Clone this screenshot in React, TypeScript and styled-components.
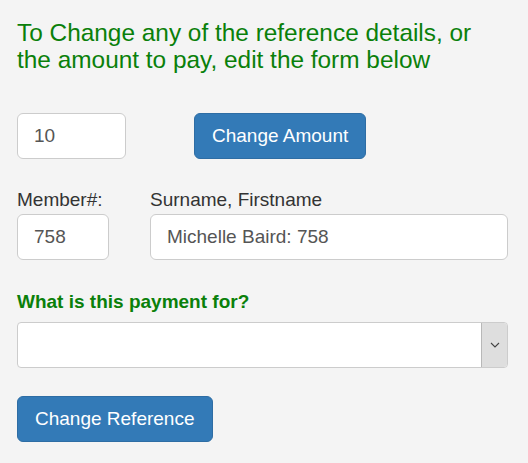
import React from 'react';
import styled, { createGlobalStyle } from 'styled-components';

const GlobalStyle = createGlobalStyle`
  body {
    margin: 0;
    background: #f4f4f4;
    font-family: 'Liberation Sans', Arial, sans-serif;
  }
`;

const Page = styled.div`
  padding: 19px 20px 20px 17px;
  display: flex;
  flex-direction: column;
`;

const Heading = styled.h2`
  margin: 0 0 40px;
  font-size: 24.4px;
  line-height: 27px;
  font-weight: normal;
  color: #0a800a;
`;

const Row = styled.div<{ $gap: number }>`
  display: flex;
  align-items: flex-end;
  gap: ${(p) => p.$gap}px;
`;

const Field = styled.div<{ $grow?: boolean }>`
  display: flex;
  flex-direction: column;
  flex: ${(p) => (p.$grow ? 1 : '0 0 auto')};
`;

const Label = styled.label`
  font-size: 19px;
  line-height: 20px;
  color: #333;
  margin-bottom: 4px;
`;

const Input = styled.input<{ $width?: number }>`
  box-sizing: border-box;
  width: ${(p) => (p.$width ? `${p.$width}px` : '100%')};
  height: 46px;
  padding: 0 16px;
  font-family: inherit;
  font-size: 19px;
  color: #555;
  background: #fff;
  border: 1px solid #ccc;
  border-radius: 6px;
  outline: none;
`;

const Button = styled.button`
  box-sizing: border-box;
  height: 46px;
  padding: 0 17px;
  font-family: inherit;
  font-size: 19px;
  color: #fff;
  background: #337ab7;
  border: 1px solid #2e6da4;
  border-radius: 6px;
  cursor: pointer;
  white-space: nowrap;

  &:hover {
    background: #286090;
  }
`;

const Question = styled.label`
  font-size: 19px;
  line-height: 20px;
  font-weight: bold;
  color: #0a800a;
  margin: 32px 0 10px;
`;

const SelectBox = styled.div`
  box-sizing: border-box;
  display: flex;
  height: 46px;
  background: #fff;
  border: 1px solid #ccc;
  border-radius: 4px;
  overflow: hidden;
`;

const Select = styled.select`
  flex: 1;
  appearance: none;
  border: none;
  background: transparent;
  font-family: inherit;
  font-size: 19px;
  color: #555;
  padding: 0 16px;
  outline: none;
`;

const ArrowBox = styled.div`
  width: 25px;
  display: flex;
  align-items: center;
  justify-content: center;
  background: #dedede;
  border-left: 1px solid #b8b8b8;
  color: #444;
`;

const Footer = styled.div`
  margin-top: 28px;
`;

const Chevron = () => (
  <svg width="10" height="6" viewBox="0 0 10 6" fill="none" stroke="currentColor" strokeWidth="1.1">
    <path d="M1 1l4 4 4-4" />
  </svg>
);

const App: React.FC = () => {
  const [amount, setAmount] = React.useState('10');
  const [member, setMember] = React.useState('758');
  const [name, setName] = React.useState('Michelle Baird: 758');

  return (
    <>
      <GlobalStyle />
      <Page>
        <Heading>
          To Change any of the reference details, or
          <br />
          the amount to pay, edit the form below
        </Heading>

        <Row $gap={68}>
          <Input $width={109} value={amount} onChange={(e) => setAmount(e.target.value)} />
          <Button>Change Amount</Button>
        </Row>

        <Row $gap={41} style={{ marginTop: 31 }}>
          <Field>
            <Label>Member#:</Label>
            <Input $width={92} value={member} onChange={(e) => setMember(e.target.value)} />
          </Field>
          <Field $grow>
            <Label>Surname, Firstname</Label>
            <Input value={name} onChange={(e) => setName(e.target.value)} />
          </Field>
        </Row>

        <Question>What is this payment for?</Question>
        <SelectBox>
          <Select defaultValue="">
            <option value=""></option>
          </Select>
          <ArrowBox>
            <Chevron />
          </ArrowBox>
        </SelectBox>

        <Footer>
          <Button>Change Reference</Button>
        </Footer>
      </Page>
    </>
  );
};

export default App;
